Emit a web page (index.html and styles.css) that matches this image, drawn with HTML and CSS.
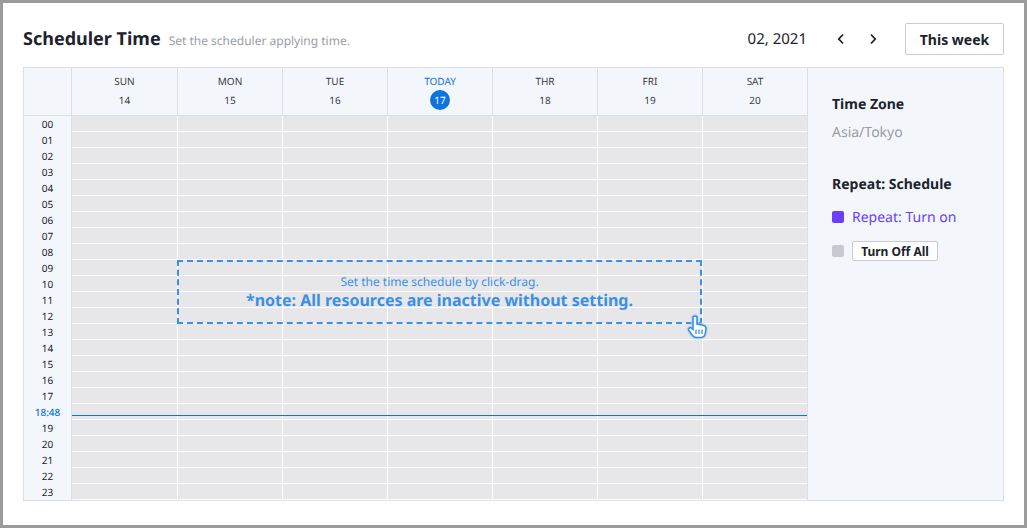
FILE: index.html
```html
<!DOCTYPE html>
<html lang="en">
  <head>
    <title>Scheduler Time</title>
    <meta charset="UTF-8">
    <link rel="stylesheet" href="styles.css">
  </head>
  <body>
    <main class="panel">
      <header class="top">
        <div class="heading">
          <h1>Scheduler Time</h1>
          <p>Set the scheduler applying time.</p>
        </div>
        <div class="controls">
          <span class="month">02, 2021</span>
          <button class="arrow" aria-label="Previous week">
            <svg width="10" height="12" viewBox="0 0 10 12"><path d="M7 1.5 2.800 6 7 10.500" /></svg>
          </button>
          <button class="arrow" aria-label="Next week">
            <svg width="10" height="12" viewBox="0 0 10 12"><path d="M3 1.500 7.200 6 3 10.500" /></svg>
          </button>
          <button class="btn-week">This week</button>
        </div>
      </header>

      <section class="scheduler">
        <div class="calendar">
          <div class="days">
            <div class="corner"></div>
            <div class="day-cols">
              <div class="day"><span>SUN</span><b>14</b></div>
              <div class="day"><span>MON</span><b>15</b></div>
              <div class="day"><span>TUE</span><b>16</b></div>
              <div class="day today"><span>TODAY</span><b>17</b></div>
              <div class="day"><span>THR</span><b>18</b></div>
              <div class="day"><span>FRI</span><b>19</b></div>
              <div class="day"><span>SAT</span><b>20</b></div>
            </div>
          </div>
          <div class="body">
            <div class="hours">
              <span>00</span><span>01</span><span>02</span><span>03</span><span>04</span><span>05</span>
              <span>06</span><span>07</span><span>08</span><span>09</span><span>10</span><span>11</span>
              <span>12</span><span>13</span><span>14</span><span>15</span><span>16</span><span>17</span>
              <span class="now">18:48</span><span>19</span><span>20</span><span>21</span><span>22</span><span>23</span>
            </div>
            <div class="grid">
              <div class="col"></div><div class="col"></div><div class="col"></div><div class="col"></div>
              <div class="col"></div><div class="col"></div><div class="col"></div>
              <div class="now-line"></div>
              <div class="drag-box">
                <span>Set the time schedule by click-drag.</span>
                <strong>*note: All resources are inactive without setting.</strong>
              </div>
              <svg class="hand" width="24" height="27" viewBox="0 0 24 27">
                <path class="hand-shadow" d="M7 3.500c0-2 4-2 4 0v6.500l6 1.200c2 .4 3 1.500 3 3.300l-.6 4.500c-.4 2.800-2 4.500-4.800 4.500h-4c-2.200 0-3.400-1-4.600-2.500l-3.200-4.600c-1.200-1.800 1-3.600 2.700-2.300l1.500 1.200z" />
                <path class="hand-fill" d="M7 3.500c0-2 4-2 4 0v6.500l6 1.200c2 .4 3 1.500 3 3.300l-.6 4.500c-.4 2.800-2 4.500-4.800 4.500h-4c-2.200 0-3.400-1-4.600-2.500l-3.200-4.600c-1.200-1.800 1-3.600 2.700-2.300l1.500 1.200z" />
                <path class="hand-lines" d="M10 15.500v4.500M13 15.500v4.500M16 15.500v4.500" />
              </svg>
            </div>
          </div>
        </div>

        <aside class="side">
          <h2>Time Zone</h2>
          <p class="zone">Asia/Tokyo</p>
          <h2 class="repeat">Repeat: Schedule</h2>
          <div class="legend legend-on"><i></i>Repeat: Turn on</div>
          <div class="legend legend-off"><i></i><button>Turn Off All</button></div>
        </aside>
      </section>
    </main>
  </body>
</html>
```

FILE: styles.css
```css
:root {
  --font: "Noto Sans", "Open Sans", sans-serif;
  --color-txt: #20222c;
  --color-muted: #9a9ca6;
  --color-line: #dcdfe6;
  --color-side: #f3f7fc;
  --color-cell: #e7e7e9;
  --color-blue: #0a74e0;
  --color-drag: #3a90e6;
  --day-cols: 106px repeat(6, 105px);
}

* {
  box-sizing: border-box;
}

html, body {
  height: 100%;
}

body {
  margin: 0;
  font-family: var(--font);
  color: var(--color-txt);
  background-color: #fff;
  text-rendering: geometricPrecision;
  overflow: hidden;
}

.panel {
  height: 528px;
  border: 3px solid #9b9b9b;
  padding: 20px 20px 0;
}

.top {
  display: flex;
  justify-content: space-between;
  align-items: center;
  height: 32px;
  margin-bottom: 12px;
}

.heading {
  display: flex;
  align-items: baseline;
  gap: 8px;
}

h1 {
  margin: 0;
  font-size: 18px;
  font-weight: 700;
}

.heading p {
  margin: 0;
  font-size: 12px;
  color: var(--color-muted);
}

.controls {
  display: flex;
  align-items: center;
}

.month {
  font-size: 15px;
  margin-right: 29px;
}

.arrow {
  display: flex;
  width: 10px;
  padding: 0;
  border: 0;
  background: none;
}

.arrow + .arrow {
  margin-left: 22px;
}

.arrow path {
  fill: none;
  stroke: var(--color-txt);
  stroke-width: 1.8;
}

.btn-week {
  width: 99px;
  height: 32px;
  margin-left: 27px;
  padding: 0;
  font-family: var(--font);
  font-size: 14px;
  font-weight: 700;
  color: var(--color-txt);
  background-color: #fff;
  border: 1px solid #c9cbd2;
  border-radius: 2px;
}

.scheduler {
  display: flex;
  height: 434px;
  border: 1px solid var(--color-line);
}

.calendar {
  width: 784px;
  flex: none;
}

.days {
  display: flex;
  height: 48px;
  background-color: var(--color-side);
  border-bottom: 1px solid var(--color-line);
}

.corner {
  width: 48px;
  flex: none;
  border-right: 1px solid var(--color-line);
}

.day-cols {
  flex: 1;
  display: grid;
  grid-template-columns: var(--day-cols);
}

.day {
  display: flex;
  flex-direction: column;
  align-items: center;
  padding-top: 5px;
  font-size: 10px;
  color: #3a3c46;
  border-right: 1px solid var(--color-line);
}

.day span {
  height: 16px;
  line-height: 16px;
}

.day b {
  width: 20px;
  height: 20px;
  margin-top: 1px;
  line-height: 20px;
  text-align: center;
  font-weight: 400;
  border-radius: 50%;
}

.today span {
  color: var(--color-blue);
}

.today b {
  color: #fff;
  background-color: var(--color-blue);
}

.body {
  display: flex;
  height: 384px;
}

.hours {
  width: 48px;
  flex: none;
  display: flex;
  flex-direction: column;
  background-color: var(--color-side);
  border-right: 1px solid var(--color-line);
}

.hours span {
  height: 16px;
  line-height: 16px;
  text-align: center;
  font-size: 10px;
}

.hours .now {
  font-weight: 500;
  color: var(--color-blue);
}

.grid {
  position: relative;
  flex: 1;
  display: grid;
  grid-template-columns: var(--day-cols);
  background-color: var(--color-cell);
  background-image: repeating-linear-gradient(to bottom, transparent 0, transparent 15px, #fff 15px, #fff 16px);
}

.col {
  border-right: 1px solid #fff;
}

.col:nth-child(7) {
  border-right-color: var(--color-line);
}

.now-line {
  position: absolute;
  left: 0;
  right: 1px;
  top: 299px;
  height: 1px;
  background-color: var(--color-blue);
}

.drag-box {
  position: absolute;
  left: 105px;
  top: 144px;
  width: 525px;
  height: 64px;
  display: flex;
  flex-direction: column;
  align-items: center;
  padding-top: 12px;
  color: var(--color-drag);
  border: 2px dashed var(--color-drag);
}

.drag-box span {
  font-size: 12px;
  line-height: 16px;
}

.drag-box strong {
  font-size: 16px;
  line-height: 20px;
}

.hand {
  position: absolute;
  left: 614px;
  top: 198px;
}

.hand-shadow {
  fill: #b5d6f5;
  stroke: #b5d6f5;
  stroke-width: 4;
  opacity: .7;
}

.hand-fill {
  fill: #fff;
  stroke: var(--color-drag);
  stroke-width: 1.6;
}

.hand-lines {
  fill: none;
  stroke: var(--color-drag);
  stroke-width: 1.3;
}

.side {
  flex: 1;
  padding: 25px 24px 0;
  background-color: var(--color-side);
}

h2 {
  margin: 0;
  font-size: 14px;
  font-weight: 700;
  line-height: 24px;
}

.zone {
  margin: 2px 0 0;
  font-size: 14px;
  line-height: 28px;
  color: var(--color-muted);
}

.repeat {
  margin-top: 26px;
}

.legend {
  display: flex;
  align-items: center;
  gap: 8px;
  font-size: 14px;
}

.legend i {
  width: 12px;
  height: 12px;
  border-radius: 2px;
}

.legend-on {
  margin-top: 8px;
  height: 24px;
  color: #6a3dff;
}

.legend-on i {
  background-color: #6a3dff;
}

.legend-off {
  margin-top: 12px;
}

.legend-off i {
  background-color: #c8cad1;
}

.legend-off button {
  width: 86px;
  height: 20px;
  padding: 0;
  font-family: var(--font);
  font-size: 12px;
  font-weight: 700;
  color: var(--color-txt);
  background-color: #fff;
  border: 1px solid #c9cbd2;
  border-radius: 2px;
}
```
